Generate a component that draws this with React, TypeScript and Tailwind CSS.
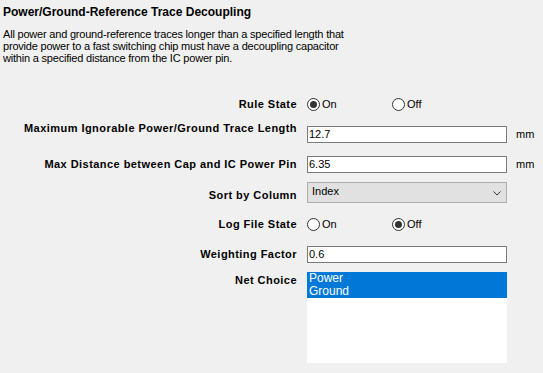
import React from "react"

function Radio({ checked, label }: { checked: boolean; label: string }) {
  return (
    <div className="flex items-center gap-[2px]">
      <span className="flex h-[13px] w-[13px] items-center justify-center rounded-full border border-[#333333] bg-white">
        {checked && <span className="h-[7px] w-[7px] rounded-full bg-[#333333]" />}
      </span>
      <span>{label}</span>
    </div>
  )
}

function Row({
  label,
  h,
  mt,
  labelClass = "",
  children,
  unit,
}: {
  label: string
  h: string
  mt: string
  labelClass?: string
  children: React.ReactNode
  unit?: string
}) {
  return (
    <div className={`flex items-center ${h} ${mt}`}>
      <div className={`w-[297px] shrink-0 text-right font-bold tracking-[0.45px] ${labelClass}`}>{label}</div>
      <div className="ml-[10px] w-[200px] shrink-0 self-stretch flex items-center">{children}</div>
      {unit && <div className="ml-[9px]">{unit}</div>}
    </div>
  )
}

export default function App() {
  return (
    <div
      className="h-[373px] w-[543px] overflow-hidden bg-[#f0f0f0] text-[11px] leading-[13px] text-black"
      style={{ fontFamily: '"Liberation Sans", Arial, sans-serif' }}
    >
      <div className="pl-[3px] pt-[5px] text-[12px] font-bold leading-[14px]">
        Power/Ground-Reference Trace Decoupling
      </div>
      <div className="mt-[9px] pl-[3px] leading-[12px] tracking-[-0.2px]">
        <div>All power and ground-reference traces longer than a specified length that</div>
        <div>provide power to a fast switching chip must have a decoupling capacitor</div>
        <div>within a specified distance from the IC power pin.</div>
      </div>

      <Row label="Rule State" h="h-[16px]" mt="mt-[32px]">
        <div className="flex items-center">
          <div className="w-[85px]">
            <Radio checked label="On" />
          </div>
          <Radio checked={false} label="Off" />
        </div>
      </Row>

      <Row
        label="Maximum Ignorable Power/Ground Trace Length"
        h="h-[17px]"
        mt="mt-[14px]"
        labelClass="mb-[12px]"
        unit="mm"
      >
        <div className="h-full w-full border border-[#7a7a7a] bg-white pl-[1px] leading-[15px]">12.7</div>
      </Row>

      <Row label="Max Distance between Cap and IC Power Pin" h="h-[17px]" mt="mt-[13px]" unit="mm">
        <div className="h-full w-full border border-[#7a7a7a] bg-white pl-[1px] leading-[15px]">6.35</div>
      </Row>

      <Row label="Sort by Column" h="h-[21px]" mt="mt-[9px]" labelClass="mt-[6px]">
        <div className="flex h-full w-full items-center justify-between border border-[#adadad] bg-[#e1e1e1] pl-[4px] pr-[5px]">
          <span className="-mt-[2px]">Index</span>
          <svg width="8" height="5" viewBox="0 0 8 5" className="mt-[1px]">
            <path d="M0.5 0.5 L4 4 L7.5 0.5" fill="none" stroke="#333" strokeWidth="1" />
          </svg>
        </div>
      </Row>

      <Row label="Log File State" h="h-[16px]" mt="mt-[13px]">
        <div className="flex items-center">
          <div className="w-[85px]">
            <Radio checked={false} label="On" />
          </div>
          <Radio checked label="Off" />
        </div>
      </Row>

      <Row label="Weighting Factor" h="h-[17px]" mt="mt-[14px]">
        <div className="h-full w-full border border-[#7a7a7a] bg-white pl-[1px] leading-[15px]">0.6</div>
      </Row>

      <div className="mt-[9px] flex items-start">
        <div className="mt-[2px] w-[297px] shrink-0 text-right font-bold tracking-[0.45px]">Net Choice</div>
        <div className="ml-[10px] h-[91px] w-[200px] shrink-0 bg-white text-[12px] leading-[13px]">
          <div className="bg-[#0078d7] pl-[2px] text-white">
            <div>Power</div>
            <div>Ground</div>
          </div>
        </div>
      </div>
    </div>
  )
}
